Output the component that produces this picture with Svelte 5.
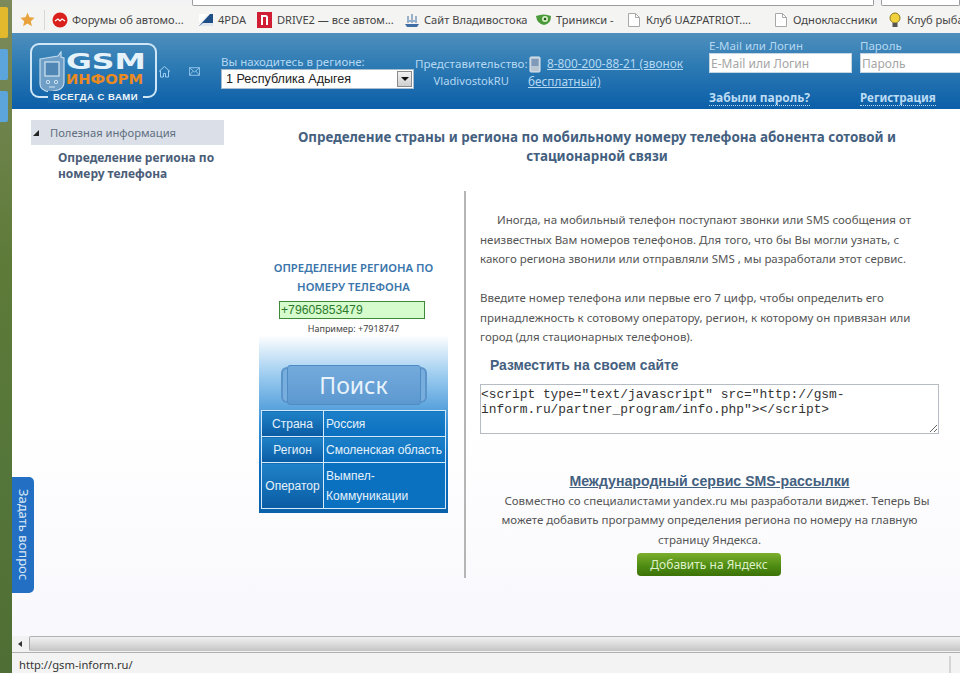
<script>
	const bookmarks = [
		{ icon: 'red', label: 'Форумы об автомо...', w: 146 },
		{ icon: 'pda', label: '4PDA', w: 59 },
		{ icon: 'drive', label: 'DRIVE2 — все автом...', w: 147 },
		{ icon: 'ship', label: 'Сайт Владивостока', w: 132 },
		{ icon: 'eye', label: 'Триникси -', w: 90 },
		{ icon: 'doc', label: 'Клуб UAZPATRIOT....', w: 147 },
		{ icon: 'doc', label: 'Одноклассники', w: 114 },
		{ icon: 'bulb', label: 'Клуб рыбаков', w: 100 }
	];

	const results = [
		{ key: 'Страна', value: 'Россия' },
		{ key: 'Регион', value: 'Смоленская область' },
		{ key: 'Оператор', value: 'Вымпел-Коммуникации', tall: true }
	];

	const snippet = '<script type="text/javascript" src="http://gsm-inform.ru/partner_program/info.php"><\/script>';
</script>

<div class="screen">
	<div class="desktop">
		<span class="tab tab--yellow"></span>
		<span class="tab tab--blue"></span>
		<span class="tab tab--blue"></span>
	</div>

	<div class="browser">
		<div class="addressbar">
			<span class="address"></span>
			<span class="address address--search"></span>
		</div>

		<div class="bookmarks">
			<svg class="star" width="15" height="15" viewBox="0 0 24 24"><path d="M12 1l3.3 7.4 8 .8-6 5.4 1.7 8L12 18.500l-7 4.100 1.700-8-6-5.400 8-.8z" fill="#e8a33c" /></svg>
			<span class="divider"></span>
			{#each bookmarks as b}
				<span class="bookmark" style="width: {b.w}px">
					<svg width="16" height="16" viewBox="0 0 16 16">
						{#if b.icon === 'red'}
							<circle cx="8" cy="8" r="7.500" fill="#d9201c" />
							<path d="M3 9l3-2 2 2 2-2 3 2" fill="none" stroke="#fff" stroke-width="1.200" />
						{:else if b.icon === 'pda'}
							<path d="M1 14L12 2h3v12z" fill="#1d4f86" />
							<path d="M1 14h14v-3H5z" fill="#dfe6ee" />
							<path d="M1 2h9L1 11z" fill="#fff" />
						{:else if b.icon === 'drive'}
							<rect x="0" y="0" width="15" height="16" fill="#d01e35" />
							<path d="M4 13V3h4.500q2.500 0 2.500 2.500V13H9V5H6v8z" fill="#fff" />
						{:else if b.icon === 'ship'}
							<path d="M1 12h14l-2 3H3z" fill="#3f6ea5" />
							<path d="M4 4v7M8 2v9M12 4v7" stroke="#5c6b7c" stroke-width="1" />
							<path d="M3 5h2v2H3zM7 3h2v3H7zM11 5h2v2h-2zM3 8h10v2H3z" fill="#8fb2d4" />
						{:else if b.icon === 'eye'}
							<path d="M0 4q8-3 15 0q0 8-7 9Q1 12 0 4z" fill="#4a9a3a" />
							<circle cx="9" cy="7" r="3" fill="#d6efc6" />
							<circle cx="9" cy="7" r="1.300" fill="#25591c" />
						{:else if b.icon === 'doc'}
							<path d="M2.500 1.500h7l4 4v9h-11z" fill="#fff" stroke="#a8a8a8" />
							<path d="M9.500 1.500v4h4" fill="none" stroke="#a8a8a8" />
						{:else}
							<circle cx="8" cy="6" r="5" fill="#f2d23c" stroke="#8a7a20" />
							<rect x="5.500" y="11" width="5" height="4" fill="#555" />
						{/if}
					</svg>
					<span class="bookmark__label">{b.label}</span>
				</span>
			{/each}
		</div>

		<header class="header">
			<div class="logo">
				<svg class="logo__phone" width="28" height="42" viewBox="0 0 28 42">
					<path d="M2 8l18-3 3-4v5l3 1v24q0 6-6 8l-9 2q-9-2-9-8z" fill="#6f9fc6" stroke="#c4dcef" stroke-width="1.200" />
					<rect x="7" y="11" width="14" height="14" fill="#4f86b3" stroke="#d2e4f2" stroke-width="1.200" />
					<circle cx="10" cy="31" r="1.700" fill="none" stroke="#d2e4f2" />
					<circle cx="18" cy="31" r="1.700" fill="none" stroke="#d2e4f2" />
					<path d="M11 36h6" stroke="#d2e4f2" />
				</svg>
				<div class="logo__words">
					<span class="logo__gsm">GSM</span>
					<span class="logo__inform">ИНФОРМ</span>
				</div>
				<span class="logo__tag">ВСЕГДА С ВАМИ</span>
			</div>

			<svg class="nav-icon home" width="13" height="13" viewBox="0 0 13 13"><path d="M1 6.500L6.500 1.500 12 6.500M2.500 5.500v6.500h3V8.500h2V12h3V5.500" fill="none" stroke="#9fd0f2" /></svg>
			<svg class="nav-icon mail" width="11" height="9" viewBox="0 0 13 10"><path d="M.5.5h12v9H.5zM.5.500l6 5 6-5M.5 9.500l4.500-5M12.500 9.500L8 4.500" fill="none" stroke="#9fd0f2" /></svg>

			<div class="region">
				<label for="region">Вы находитесь в регионе:</label>
				<div class="select" id="region">
					<span>1 Республика Адыгея</span>
					<span class="select__arrow"></span>
				</div>
			</div>

			<div class="agent">
				<div>Представительство:</div>
				<div class="agent__city">VladivostokRU</div>
			</div>

			<div class="hotline">
				<svg width="12" height="17" viewBox="0 0 12 17"><rect x="1" y="1" width="10" height="15" rx="1" fill="#b9c6d4" stroke="#e2e9f0" /><rect x="2.500" y="3" width="7" height="7" fill="#7f9ab8" /></svg>
				<a href="#tel">8-800-200-88-21 (звонок бесплатный)</a>
			</div>

			<div class="login">
				<div class="field">
					<span class="field__label">E-Mail или Логин</span>
					<input class="field__input" placeholder="E-Mail или Логин" />
					<a href="#forgot">Забыли пароль?</a>
				</div>
				<div class="field field--pass">
					<span class="field__label">Пароль</span>
					<input class="field__input" placeholder="Пароль" />
					<a class="field__reg" href="#register">Регистрация</a>
				</div>
			</div>
		</header>

		<main class="page">
			<aside class="sidebar">
				<div class="sidebar__head"><span class="sidebar__arrow"></span>Полезная информация</div>
				<a class="sidebar__link" href="#region">Определение региона по номеру телефона</a>
			</aside>

			<div class="content">
				<h1>Определение страны и региона по мобильному номеру телефона абонента сотовой и стационарной связи</h1>

				<div class="columns">
					<section class="widget">
						<h2>ОПРЕДЕЛЕНИЕ РЕГИОНА ПО НОМЕРУ ТЕЛЕФОНА</h2>
						<input class="phone" value="+79605853479" />
						<div class="hint">Например: +7918747</div>
						<div class="panel">
							<button class="search">Поиск</button>
							<table>
								<tbody>
									{#each results as r}
										<tr class:tall={r.tall}>
											<th>{r.key}</th>
											<td>{r.value}</td>
										</tr>
									{/each}
								</tbody>
							</table>
						</div>
					</section>

					<section class="info">
						<p class="lead">Иногда, на мобильный телефон поступают звонки или SMS сообщения от неизвестных Вам номеров телефонов. Для того, что бы Вы могли узнать, с какого региона звонили или отправляли SMS , мы разработали этот сервис.</p>
						<p class="second">Введите номер телефона или первые его 7 цифр, чтобы определить его принадлежность к сотовому оператору, регион, к которому он привязан или город (для стационарных телефонов).</p>
						<h3>Разместить на своем сайте</h3>
						<textarea readonly value={snippet}></textarea>
						<div class="promo">
							<a class="promo__title" href="#sms">Международный сервис SMS-рассылки</a>
							<p>Совместно со специалистами yandex.ru мы разработали виджет. Теперь Вы можете добавить программу определения региона по номеру на главную страницу Яндекса.</p>
							<button class="add">Добавить на Яндекс</button>
						</div>
					</section>
				</div>
			</div>

			<div class="ask">Задать вопрос</div>
		</main>

		<div class="scrollbar">
			<span class="scrollbar__arrow"></span>
			<span class="scrollbar__track"></span>
		</div>

		<footer class="status">
			<span>http://gsm-inform.ru/</span>
			<span class="status__grip"></span>
		</footer>
	</div>
</div>

<style>
	:global(body) {
		margin: 0;
		background: #fff;
	}

	.screen {
		display: flex;
		width: 960px;
		height: 673px;
		overflow: hidden;
		font-family: 'Noto Sans', sans-serif;
	}

	/* desktop strip on the left */
	.desktop {
		width: 12px;
		flex: none;
		display: flex;
		flex-direction: column;
		gap: 11px;
		padding-top: 7px;
		box-sizing: border-box;
		background: linear-gradient(#7d8a5c, #5d7a38 40%, #55763a 70%, #4f6e35);
	}

	.tab {
		display: block;
		width: 8px;
		height: 31px;
		border-radius: 0 2px 2px 0;
	}

	.tab--yellow {
		background: #e2b92c;
	}

	.tab--blue {
		background: #5ba4dc;
	}

	.browser {
		flex: 1;
		min-width: 0;
		display: flex;
		flex-direction: column;
	}

	.addressbar {
		height: 6px;
		flex: none;
		display: flex;
		gap: 7px;
		padding-left: 180px;
		box-sizing: border-box;
		background: #f3f3f3;
	}

	.address {
		width: 692px;
		height: 6px;
		box-sizing: border-box;
		background: #fff;
		border: 1px solid #9c9c9c;
		border-top: 0;
		border-radius: 0 0 2px 2px;
	}

	.address--search {
		width: 80px;
	}

	.bookmarks {
		height: 27px;
		flex: none;
		display: flex;
		align-items: center;
		padding-left: 8px;
		background: #f4f4f3;
		font-size: 11.100px;
		color: #444;
		white-space: nowrap;
	}

	.star {
		flex: none;
	}

	.divider {
		width: 1px;
		height: 20px;
		margin: 0 7px 0 9px;
		background: #d8d8d8;
		flex: none;
	}

	.bookmark {
		flex: none;
		display: flex;
		align-items: center;
		gap: 4px;
	}

	.header {
		position: relative;
		height: 76px;
		flex: none;
		display: flex;
		background: linear-gradient(#4f8fbd, #2f7cb4 40%, #0b5ea8);
		color: #b5d8f2;
		font-size: 11.600px;
		white-space: nowrap;
	}

	.logo {
		position: absolute;
		left: 18px;
		top: 10px;
		width: 127px;
		height: 55px;
		box-sizing: border-box;
		border: 2px solid #cfe6f6;
		border-radius: 9px;
		display: flex;
		padding: 7px 0 0 6px;
	}

	.logo__phone {
		flex: none;
		margin-top: -1px;
	}

	.logo__words {
		display: flex;
		flex-direction: column;
		padding-top: 1px;
		font-family: 'DejaVu Sans', sans-serif;
		font-weight: 700;
		line-height: 1;
	}

	.logo__gsm {
		font-size: 21px;
		line-height: 18px;
		height: 18px;
		color: #e6f2fa;
		transform: scaleX(1.5);
		transform-origin: left center;
	}

	.logo__inform {
		font-size: 14px;
		line-height: 16px;
		color: #ea8a22;
		transform: scaleX(1.05);
		transform-origin: left center;
	}

	.logo__tag {
		position: absolute;
		left: 16px;
		bottom: -7px;
		padding: 0 5px;
		background: #1a69ac;
		font-family: 'Liberation Sans', sans-serif;
		font-weight: 700;
		font-size: 9.500px;
		line-height: 12px;
		letter-spacing: 0.500px;
		color: #eef6fb;
	}

	.nav-icon {
		position: absolute;
	}

	.home {
		left: 146px;
		top: 32px;
	}

	.mail {
		left: 177px;
		top: 34px;
	}

	.region {
		position: absolute;
		left: 209px;
		top: 21px;
	}

	.region label {
		display: block;
		line-height: 15px;
		font-size: 11.500px;
	}

	.select {
		width: 193px;
		height: 20px;
		box-sizing: border-box;
		border: 1px solid #a9bccd;
		background: #fff;
		color: #222;
		font-family: 'Liberation Sans', sans-serif;
		font-size: 12.600px;
		line-height: 18px;
		padding-left: 4px;
		display: flex;
		justify-content: space-between;
	}

	.select__arrow {
		position: relative;
		width: 15px;
		height: 16px;
		margin: 1px;
		background: linear-gradient(#f2f2f2, #cfcfcf);
		border: 1px solid #8b8b8b;
		box-sizing: border-box;
	}

	.select__arrow::after {
		content: '';
		position: absolute;
		left: 3px;
		top: 5px;
		border: 4px solid transparent;
		border-top-color: #111;
		border-bottom: 0;
	}

	.agent {
		position: absolute;
		left: 403px;
		top: 22px;
		text-align: center;
		line-height: 17px;
	}

	.agent__city {
		font-size: 11.200px;
	}

	.hotline {
		position: absolute;
		left: 516px;
		top: 21px;
		width: 168px;
		white-space: normal;
		font-size: 11.800px;
		line-height: 18px;
	}

	.hotline svg {
		position: absolute;
		left: 1px;
		top: 2px;
	}

	.hotline a {
		display: block;
		color: #b5d8f2;
		text-indent: 19px;
	}

	.login {
		position: absolute;
		left: 697px;
		top: 5px;
		display: flex;
		gap: 8px;
	}

	.field {
		width: 143px;
		display: flex;
		flex-direction: column;
	}

	.field--pass {
		width: 110px;
	}

	.field__label {
		line-height: 15px;
		font-size: 11.500px;
	}

	.field__input {
		width: 100%;
		height: 20px;
		box-sizing: border-box;
		margin: 0;
		padding: 1px 1px 0;
		border: 1px solid #c6d5e2;
		background: #fff;
		font-family: inherit;
		font-size: 12px;
		outline: none;
	}

	.field__input::placeholder {
		color: #a5a5a5;
		opacity: 1;
	}

	.field a {
		align-self: flex-start;
		margin-top: 18px;
		font-weight: 700;
		font-size: 12px;
		line-height: 14px;
		color: #bcdcf4;
		text-decoration: none;
		border-bottom: 1px dotted #bcdcf4;
	}

	.field a.field__reg {
		font-size: 11.600px;
	}

	.page {
		position: relative;
		height: 527px;
		flex: none;
		display: flex;
		background: linear-gradient(#fff, #fff 60%, #f8f8fd);
		color: #555;
		font-size: 11.500px;
	}

	.sidebar {
		width: 193px;
		margin: 11px 0 0 19px;
		flex: none;
	}

	.sidebar__head {
		position: relative;
		height: 25px;
		padding-left: 19px;
		box-sizing: border-box;
		background: #dbe0e8;
		color: #5f6f80;
		font-size: 11.200px;
		line-height: 25px;
	}

	.sidebar__arrow {
		position: absolute;
		left: 2px;
		top: 10px;
		border-left: 6px solid transparent;
		border-bottom: 6px solid #222;
	}

	.sidebar__link {
		display: block;
		margin: 5px 0 0 27px;
		font-size: 12px;
		font-weight: 700;
		line-height: 16px;
		color: #4a5d78;
		text-decoration: none;
	}

	.content {
		width: 736px;
		flex: none;
	}

	h1 {
		width: 620px;
		margin: 19px 0 0 63px;
		text-align: center;
		font-size: 13.400px;
		font-weight: 700;
		line-height: 19px;
		color: #44607f;
	}

	.columns {
		display: flex;
		margin: 25px 0 0 35px;
	}

	.widget {
		width: 189px;
		flex: none;
		padding-top: 68px;
		text-align: center;
	}

	h2 {
		margin: 0;
		width: 189px;
		padding: 0 10px;
		box-sizing: border-box;
		font-size: 11.300px;
		font-weight: 600;
		line-height: 18.500px;
		color: #3a75ab;
	}

	.phone {
		display: block;
		width: 146px;
		height: 18px;
		margin: 5px 0 0 20px;
		padding: 0 1px;
		box-sizing: border-box;
		border: 1px solid #3f8a3a;
		background: #d6fccd;
		color: #2c7a2c;
		font-family: 'Liberation Sans', sans-serif;
		font-size: 12.200px;
		outline: none;
	}

	.hint {
		padding-top: 3px;
		font-size: 9px;
		line-height: 13px;
		color: #444;
	}

	.panel {
		height: 178px;
		padding: 30px 2px 0;
		box-sizing: border-box;
		background: linear-gradient(#fff, #9fcdf0 22%, #3a90d4 50%, #0a6bbc 75%, #0a62aa);
	}

	.search {
		position: relative;
		display: block;
		width: 134px;
		height: 40px;
		margin: 0 auto 5px;
		padding: 0;
		border: 1px solid #4f8cc4;
		border-radius: 3px;
		background: linear-gradient(#74abdc, #5c98d0);
		color: #e8f3fb;
		font-family: 'Noto Sans', sans-serif;
		font-size: 23px;
		line-height: 1;
	}

	/* end caps that stick out of the button's sides */
	.search::before,
	.search::after {
		content: '';
		position: absolute;
		top: 1px;
		bottom: 1px;
		width: 6px;
		box-sizing: border-box;
		border: 2px solid #5a94c9;
		background: #78aedd;
	}

	.search::before {
		left: -7px;
		border-radius: 6px 0 0 6px;
		border-right: 0;
	}

	.search::after {
		right: -7px;
		border-radius: 0 6px 6px 0;
		border-left: 0;
	}

	table {
		width: 185px;
		height: 98px;
		border-collapse: collapse;
		border: 1px solid #d4eafa;
		table-layout: fixed;
		font-family: 'Liberation Sans', sans-serif;
		font-size: 12px;
		color: #e6f2fb;
	}

	tr {
		height: 26px;
	}

	tr.tall {
		height: 46px;
	}

	th,
	td {
		border: 1px solid #d4eafa;
		padding: 0 2px;
		font-weight: 400;
		line-height: 20px;
		text-align: left;
	}

	th {
		width: 57px;
		text-align: center;
		background: linear-gradient(#1f82c8, #0a5ca4);
	}

	td {
		background: linear-gradient(#1c80c8, #0a70c0);
		white-space: nowrap;
	}

	tr.tall td {
		white-space: normal;
		background: #0a70c0;
	}

	.info {
		width: 480px;
		height: 387px;
		flex: none;
		margin-left: 16px;
		padding: 19px 0 0 14px;
		box-sizing: border-box;
		border-left: 2px solid #b5b5b5;
		overflow: hidden;
	}

	.info p {
		width: 440px;
		margin: 0;
		line-height: 19.500px;
	}

	.lead {
		text-indent: 17px;
	}

	.info p.second {
		margin-top: 19.500px;
	}

	h3 {
		margin: 9px 0 0 10px;
		font-family: 'Liberation Sans', sans-serif;
		font-size: 13.900px;
		font-weight: 700;
		line-height: 18px;
		color: #44607f;
	}

	textarea {
		display: block;
		width: 459px;
		height: 50px;
		margin: 10px 0 0;
		padding: 2px 0;
		box-sizing: border-box;
		border: 1px solid #b5bcc4;
		font-family: 'Liberation Mono', monospace;
		font-size: 12.900px;
		line-height: 15px;
		color: #333;
		background: #fff;
		outline: none;
	}

	.promo {
		width: 459px;
		margin-top: 38px;
		text-align: center;
	}

	.promo__title {
		font-family: 'Liberation Sans', sans-serif;
		font-size: 14.150px;
		font-weight: 700;
		line-height: 18px;
		color: #44607f;
	}

	.info .promo p {
		width: 442px;
		margin: 1px auto 0;
		text-indent: 15px;
	}

	.add {
		display: block;
		width: 144px;
		height: 23px;
		margin: 4px 0 0 157px;
		padding: 0;
		border: 0;
		border-radius: 4px;
		background: linear-gradient(#7cae2c, #4c8a12 60%, #3c7208);
		color: #dff0c8;
		font-family: 'Noto Sans', sans-serif;
		font-size: 12px;
	}

	.ask {
		position: absolute;
		left: 0;
		top: 368px;
		width: 22px;
		height: 116px;
		box-sizing: border-box;
		border-radius: 0 5px 5px 0;
		background: #226fc4;
		color: #dbe8f5;
		font-size: 13px;
		line-height: 20px;
		writing-mode: vertical-rl;
		text-align: center;
	}

	.scrollbar {
		position: relative;
		height: 17px;
		flex: none;
		box-sizing: border-box;
		background: #f2f2f2;
		border-bottom: 1px solid #b0b0b0;
	}

	.scrollbar__arrow {
		position: absolute;
		left: 6px;
		top: 5px;
		border: 3px solid transparent;
		border-right: 4px solid #333;
		border-left: 0;
	}

	.scrollbar__track {
		position: absolute;
		left: 17px;
		right: 0;
		top: 0;
		bottom: 1px;
		box-sizing: border-box;
		border-top: 1px solid #b0b0b0;
		border-left: 1px solid #aaa;
		border-radius: 2px 0 0 2px;
		background: linear-gradient(#f0f0f0, #dedede 45%, #c4c4c4);
	}

	.status {
		position: relative;
		height: 20px;
		flex: none;
		padding-left: 7px;
		background: #f3f3f3;
		color: #333;
		font-family: 'Noto Sans', sans-serif;
		font-size: 11.200px;
		line-height: 24px;
	}

	.status__grip {
		position: absolute;
		right: 9px;
		top: 3px;
		width: 2px;
		height: 17px;
		background: #d4d4d4;
	}
</style>
